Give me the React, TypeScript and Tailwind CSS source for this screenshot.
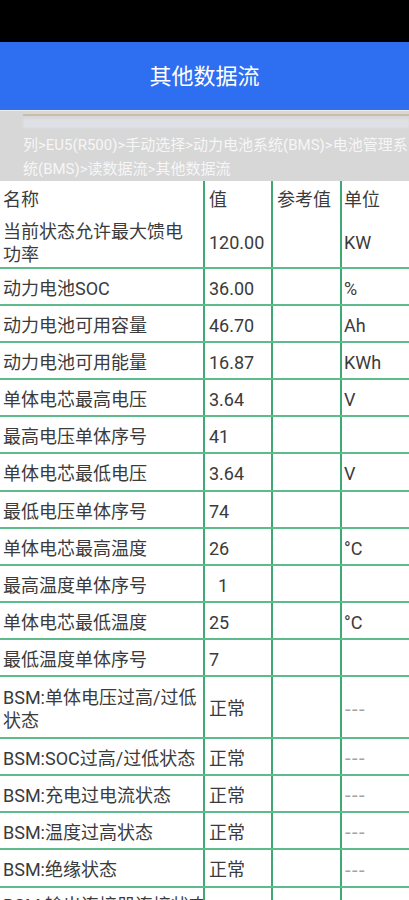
import React from "react";

type Row = { name: React.ReactNode; value: string; unit: string; h: number; top?: boolean };

const rows: Row[] = [
  { name: <>当前状态允许最大馈电<br />功率</>, value: "120.00", unit: "KW", h: 54 },
  { name: "动力电池SOC", value: "36.00", unit: "%", h: 37 },
  { name: "动力电池可用容量", value: "46.70", unit: "Ah", h: 37 },
  { name: "动力电池可用能量", value: "16.87", unit: "KWh", h: 37 },
  { name: "单体电芯最高电压", value: "3.64", unit: "V", h: 37 },
  { name: "最高电压单体序号", value: "41", unit: "", h: 37 },
  { name: "单体电芯最低电压", value: "3.64", unit: "V", h: 38 },
  { name: "最低电压单体序号", value: "74", unit: "", h: 37 },
  { name: "单体电芯最高温度", value: "26", unit: "°C", h: 37 },
  { name: "最高温度单体序号", value: "\u00a0\u00a01", unit: "", h: 37 },
  { name: "单体电芯最低温度", value: "25", unit: "°C", h: 37 },
  { name: "最低温度单体序号", value: "7", unit: "", h: 37 },
  { name: <>BSM:单体电压过高/过低<br />状态</>, value: "正常", unit: "---", h: 62 },
  { name: "BSM:SOC过高/过低状态", value: "正常", unit: "---", h: 37 },
  { name: "BSM:充电过电流状态", value: "正常", unit: "---", h: 37 },
  { name: "BSM:温度过高状态", value: "正常", unit: "---", h: 37 },
  { name: "BSM:绝缘状态", value: "正常", unit: "---", h: 38 },
  { name: "BSM:输出连接器连接状态", value: "", unit: "", h: 37, top: true },
];

function Cells({ name, value, refv, unit, h, border, top }: { name: React.ReactNode; value: string; refv: string; unit: string; h: number; border: boolean; top?: boolean }) {
  return (
    <div
      className={`flex shrink-0 ${border ? "border-b-2 border-[#5dbb8c]" : ""}`}
      style={{ height: h }}
    >
      <div className={`w-[203px] shrink-0 flex pl-[3px] pr-[2px] leading-[23px] whitespace-nowrap overflow-hidden ${top ? "items-start pt-[6px]" : "items-center pt-[3px]"}`}>
        <span>{name}</span>
      </div>
      <div className="w-[68px] shrink-0 flex items-center pl-[4px] pt-[3px] border-l-2 border-[#3fa873] whitespace-pre">
        {value}
      </div>
      <div className="w-[69px] shrink-0 flex items-center pl-[4px] pt-[3px] border-l-2 border-[#3fa873]">
        {refv}
      </div>
      <div className="w-[69px] shrink-0 flex items-center pl-[2px] pt-[3px] border-l-2 border-[#3fa873]">
        {unit === "---" ? <span className="text-[#a3a3a3] text-[20px] tracking-[1.5px] pl-[1px]">---</span> : unit}
      </div>
    </div>
  );
}

export default function App() {
  return (
    <div
      className="w-[409px] h-[900px] overflow-hidden bg-white text-[#3b3b3b] text-[18px]"
      style={{ fontFamily: "Roboto, 'Noto Sans CJK SC', sans-serif" }}
    >
      <div className="h-[42px] bg-black" />
      <div className="h-[68px] bg-[#2e6ef1] flex items-center justify-center text-white text-[22px]">
        其他数据流
      </div>
      <div className="h-[71px] bg-[#d7d7d7] border-t border-[#eeeeee] flex flex-col overflow-hidden">
        <div className="ml-[23px] mt-[3px] h-[2px] bg-[#cdbda6]" />
        <div className="ml-[23px] mt-[3px] h-[11px] bg-[#dfe1e7] blur-[1px]" />
        <div className="pl-[23px] pt-[5px] text-[15px] leading-[24px] text-[#f6f6f6] whitespace-nowrap">
          <div>列&gt;EU5(R500)&gt;手动选择&gt;动力电池系统(BMS)&gt;电池管理系</div>
          <div>统(BMS)&gt;读数据流&gt;其他数据流</div>
        </div>
      </div>
      <div className="flex flex-col">
        <Cells name="名称" value="值" refv="参考值" unit="单位" h={34} border={false} />
        {rows.map((r, i) => (
          <Cells key={i} name={r.name} value={r.value} refv="" unit={r.unit} h={r.h} border={true} top={r.top} />
        ))}
      </div>
    </div>
  );
}
